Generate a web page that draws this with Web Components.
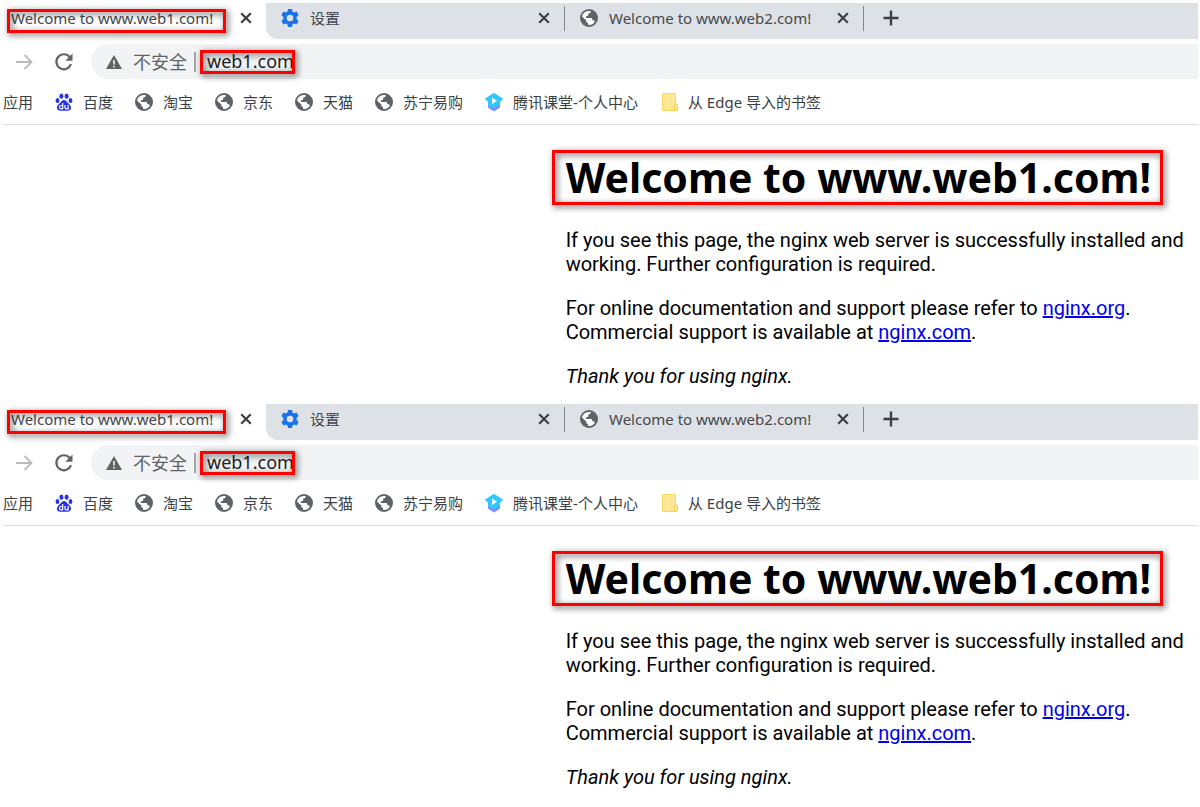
<!DOCTYPE html>
<html lang="zh">
<head>
<meta charset="utf-8">
<title>Welcome to www.web1.com!</title>
<style>
  body {
    margin: 0;
    padding: 3px 2px 0 3px;
    background: #fff;
  }
</style>
</head>
<body>

<browser-shot></browser-shot>
<browser-shot></browser-shot>

<script>
const icons = {
  globe: `<circle cx="10" cy="10" r="9" fill="#5f6368"/>
    <path fill="#fff" d="M3 8.6C3.500 5.500 6.200 3 9.600 2.900L11.500 3.100C12.100 4.200 11.300 5.300 10 5.400L9.200 5.500V7C9.200 7.800 8.600 8.200 7.800 8.200H7V10H11.800C12.900 10 13.300 10.700 13.300 11.500V12.300H14.300C15.200 12.300 15.600 12.800 15.600 13.500L15.300 14.700A7 7 0 0 1 9 16.900V15C8 15 7.300 14.300 7.300 13.300V12.400Z"/>`,
  gear: `<path fill="#1a73e8" fill-rule="evenodd" d="M8 1h4l.5 2.500 1.700 1 2.400-.9 2 3.500-1.900 1.700v2.400l1.900 1.700-2 3.500-2.400-.9-1.700 1L12 19H8l-.5-2.500-1.700-1-2.400.9-2-3.500 1.900-1.700V8.800L1.400 7.100l2-3.500 2.400.9 1.700-1zM10 6.700a3.300 3.300 0 1 0 0 6.600 3.300 3.300 0 0 0 0-6.600z"/>`,
  paw: `<g fill="#2932e1"><ellipse cx="7.400" cy="4.200" rx="2" ry="2.700"/><ellipse cx="12.600" cy="4.200" rx="2" ry="2.700"/>
    <ellipse cx="3.500" cy="8.400" rx="1.900" ry="2.500"/><ellipse cx="16.500" cy="8.400" rx="1.900" ry="2.500"/>
    <path d="M10 8c2 0 2.700 1.700 4 3 1.600 1.500 3 2.600 3 4.800 0 2-1.400 3-3.300 3H6.300c-1.900 0-3.300-1-3.300-3 0-2.200 1.400-3.300 3-4.800C7.300 9.700 8 8 10 8z"/></g>
    <path fill="none" stroke="#fff" stroke-width="1.200" d="M8.700 11v6M8.700 13.500H7.200a1.700 1.700 0 0 0 0 3.400h1.500M11 13v2.700c0 .8.500 1.200 1.200 1.200h1.900V13"/>`,
  lesson: `<path fill="#7b8cff" d="M4 12l6 3.500 6-3.500v3.500l-6 4-6-4z"/>
    <path fill="#31c8ff" d="M10 .8l9.200 5.900L16 10v3l-6 3.300L4 13v-3L.8 6.700z"/><path fill="#fff" d="M8 5.500l5 3.200-5 3.300z"/>`,
  folder: `<rect x="3" y="1" width="14" height="18" rx="1.500" fill="#fbd95c"/><rect x="4" y="2" width="12" height="16" rx="1" fill="#ffe793"/>
    <path fill="#ffe793" stroke="#f7cf4b" d="M15.500 18.500v-5a1.500 1.500 0 0 1 3 0V17a1.500 1.500 0 0 1-1.500 1.500z"/>`,
  close: `<path fill="none" stroke="#3c4043" stroke-width="2.200" d="M5.200 5.200l9.600 9.600M14.800 5.200l-9.600 9.600"/>`,
  plus: `<path fill="none" stroke="#3c4043" stroke-width="2.400" d="M10 2.500v15M2.500 10h15"/>`,
  forward: `<path fill="none" stroke="#b9bbbe" stroke-width="1.800" d="M2 10h15M10.500 3l7 7-7 7"/>`,
  reload: `<path fill="none" stroke="#5f6368" stroke-width="2.200" d="M17 12.200A7.500 7.500 0 1 1 15.700 5"/><path fill="#5f6368" d="M18.500 1.500v7.200h-7.200z"/>`,
  warning: `<path fill="#5f6368" d="M10 3l8 14H2z"/><path fill="#f1f3f4" d="M9.200 8h1.600v4.500H9.200zM9.200 13.800h1.600v1.600H9.200z"/>`
};

class UiIcon extends HTMLElement {
  constructor() {
    super();
    this.attachShadow({ mode: "open" });
  }

  connectedCallback() {
    this.shadowRoot.innerHTML = `
      <style>
        :host { display: block; flex: none; width: 20px; height: 20px; }
        svg { display: block; width: 100%; height: 100%; }
      </style>
      <svg viewBox="0 0 20 20" aria-hidden="true">${icons[this.getAttribute("name")]}</svg>`;
  }
}

// red frame that lies over whatever is slotted in
class RedMark extends HTMLElement {
  constructor() {
    super();
    this.attachShadow({ mode: "open" }).innerHTML = `
      <style>
        :host { display: block; position: relative; width: fit-content; }
        .frame {
          position: absolute;
          inset: var(--mark-inset, 0);
          border: 3px solid #f00;
          filter: drop-shadow(2px 2px 3px rgba(0, 0, 0, 0.7));
          pointer-events: none;
        }
      </style>
      <slot></slot>
      <div class="frame"></div>`;
  }
}

class BrowserTab extends HTMLElement {
  constructor() {
    super();
    this.attachShadow({ mode: "open" }).innerHTML = `
      <style>
        :host {
          display: flex;
          align-items: center;
          box-sizing: border-box;
          height: 30px;
          padding: 0 10px 0 14px;
        }
        .title { flex: 1; display: flex; white-space: nowrap; line-height: 20px; }
        button { padding: 0; border: 0; background: none; }
        slot[name="icon"]::slotted(*) { margin-right: 10px; }
      </style>
      <slot name="icon"></slot>
      <div class="title"><slot></slot></div>
      <button aria-label="关闭"><ui-icon name="close"></ui-icon></button>`;
  }
}

class TabStrip extends HTMLElement {
  constructor() {
    super();
    this.attachShadow({ mode: "open" }).innerHTML = `
      <style>
        :host { display: flex; height: 36px; color: #45494d; }
        .active { flex: 0 0 263px; padding: 0 10px 0 8px; --mark-inset: 1px -13px -5px -4px; }
        .rest { flex: 1; display: flex; background: #dee1e6; border-bottom-left-radius: 12px; }
        .rest browser-tab { flex: 0 1 298px; }
        .line { flex: none; width: 1px; height: 25px; margin-top: 3px; background: #84878b; }
        button { align-self: flex-start; padding: 5px 17px; border: 0; background: none; }
      </style>
      <browser-tab class="active"><red-mark>Welcome to www.web1.com!</red-mark></browser-tab>
      <div class="rest">
        <browser-tab><ui-icon slot="icon" name="gear"></ui-icon>设置</browser-tab>
        <div class="line"></div>
        <browser-tab><ui-icon slot="icon" name="globe"></ui-icon>Welcome to www.web2.com!</browser-tab>
        <div class="line"></div>
        <button aria-label="新标签页"><ui-icon name="plus"></ui-icon></button>
      </div>`;
  }
}

class AddressBar extends HTMLElement {
  constructor() {
    super();
    this.attachShadow({ mode: "open" }).innerHTML = `
      <style>
        :host { display: flex; align-items: center; margin-top: 5px; padding-left: 11px; }
        button { padding: 0; margin-right: 20px; border: 0; background: none; }
        .field {
          flex: 1;
          display: flex;
          align-items: center;
          height: 35px;
          margin-left: -3px;
          padding-left: 13px;
          border-radius: 18px 0 0 18px;
          background: #f1f3f4;
          font-size: 18px;
          line-height: 24px;
          color: #5f6368;
        }
        label { margin-left: 9px; }
        .line { width: 2px; height: 20px; margin: 0 11px 0 7px; background: #a2a5a9; }
        red-mark { --mark-inset: 0 -2px 0 -7px; }
        input {
          display: block;
          width: 86px;
          height: 24px;
          padding: 0 0 2px;
          border: 0;
          box-sizing: border-box;
          background: none;
          font: inherit;
          color: #202124;
        }
      </style>
      <button aria-label="前进"><ui-icon name="forward"></ui-icon></button>
      <button aria-label="重新加载"><ui-icon name="reload"></ui-icon></button>
      <div class="field">
        <ui-icon name="warning"></ui-icon>
        <label for="url">不安全</label>
        <div class="line"></div>
        <red-mark><input id="url" type="text" value="web1.com"></red-mark>
      </div>`;
  }
}

class BookmarkBar extends HTMLElement {
  constructor() {
    super();
    this.attachShadow({ mode: "open" }).innerHTML = `
      <style>
        :host {
          display: flex;
          align-items: center;
          gap: 21px;
          height: 45px;
          border-bottom: 1px solid #dadce0;
          white-space: nowrap;
        }
        a { display: flex; align-items: center; gap: 9px; color: #3c4043; text-decoration: none; line-height: 20px; }
      </style>
      <a href="#">应用</a>
      <a href="#"><ui-icon name="paw"></ui-icon>百度</a>
      <a href="#"><ui-icon name="globe"></ui-icon>淘宝</a>
      <a href="#"><ui-icon name="globe"></ui-icon>京东</a>
      <a href="#"><ui-icon name="globe"></ui-icon>天猫</a>
      <a href="#"><ui-icon name="globe"></ui-icon>苏宁易购</a>
      <a href="#"><ui-icon name="lesson"></ui-icon>腾讯课堂-个人中心</a>
      <a href="#"><ui-icon name="folder"></ui-icon>从 Edge 导入的书签</a>`;
  }
}

class NginxPage extends HTMLElement {
  constructor() {
    super();
    this.attachShadow({ mode: "open" }).innerHTML = `
      <style>
        :host {
          display: grid;
          grid-template-columns: 47fr 53fr;
          padding: 28px 0 16px;
          font: 20px/24px Roboto, sans-serif;
          color: #000;
        }
        main { grid-column: 2; padding-left: 1px; }
        red-mark { --mark-inset: -3px -12px -4px -14px; }
        h1 { margin: 0; font: bold 41px/48px "Noto Sans", sans-serif; white-space: nowrap; }
        p { margin: 20px 0 0; }
        red-mark + p { margin-top: 27px; }
        a { color: #00e; }
      </style>
      <main>
        <red-mark><h1>Welcome to www.web1.com!</h1></red-mark>
        <p>If you see this page, the nginx web server is successfully installed and working. Further configuration is required.</p>
        <p>For online documentation and support please refer to <a href="#">nginx.org</a>.<br>
        Commercial support is available at <a href="#">nginx.com</a>.</p>
        <p><em>Thank you for using nginx.</em></p>
      </main>`;
  }
}

class BrowserShot extends HTMLElement {
  constructor() {
    super();
    this.attachShadow({ mode: "open" }).innerHTML = `
      <style>
        :host {
          display: block;
          font: 15px "Noto Sans", "Noto Sans CJK SC", sans-serif;
          color: #3c4043;
        }
      </style>
      <tab-strip></tab-strip>
      <address-bar></address-bar>
      <bookmark-bar></bookmark-bar>
      <nginx-page></nginx-page>`;
  }
}

customElements.define("ui-icon", UiIcon);
customElements.define("red-mark", RedMark);
customElements.define("browser-tab", BrowserTab);
customElements.define("tab-strip", TabStrip);
customElements.define("address-bar", AddressBar);
customElements.define("bookmark-bar", BookmarkBar);
customElements.define("nginx-page", NginxPage);
customElements.define("browser-shot", BrowserShot);
</script>
</body>
</html>
